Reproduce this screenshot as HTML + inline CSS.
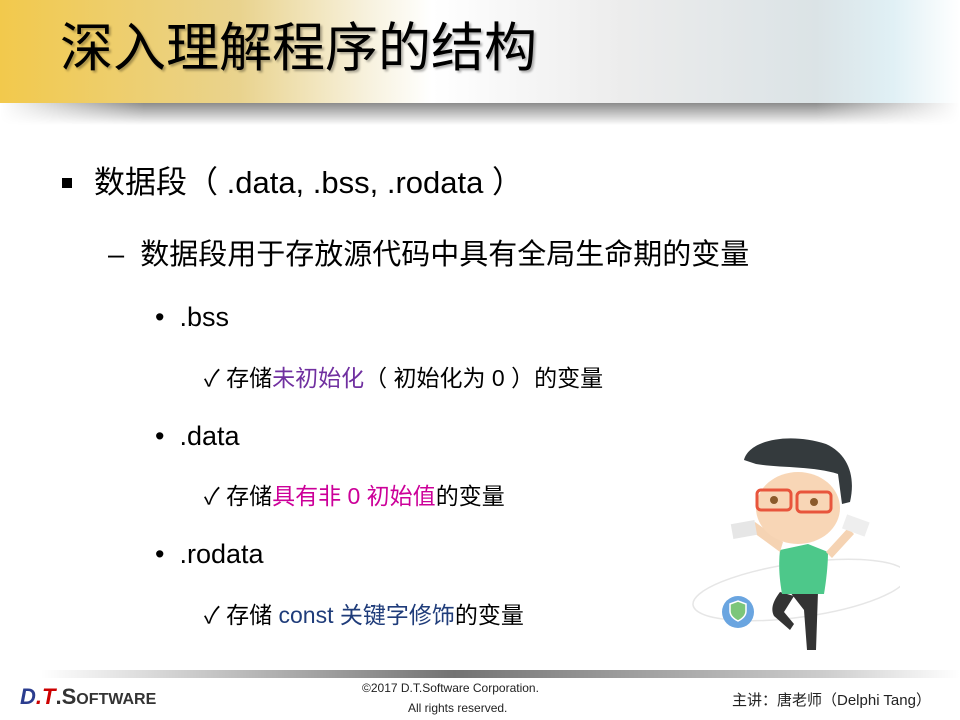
<!DOCTYPE html>
<html><head><meta charset="utf-8"><style>
body{margin:0;width:960px;height:720px;position:relative;overflow:hidden;background:#fff;font-family:"Liberation Sans","Noto Sans CJK SC",sans-serif;color:#000}
.t{position:absolute;white-space:nowrap;line-height:1}
#band{position:absolute;left:0;top:0;width:960px;height:103px;background:linear-gradient(90deg,#f2c94c 0%,#e9d38e 25%,#f7f1dc 38%,#fff 45%,#ececec 65%,#dbe3e6 85%,#e0f0f5 93%,#fff 100%)}
#sh{position:absolute;left:0;top:103px;width:960px;height:22px;background:linear-gradient(180deg,rgba(0,0,0,.45),rgba(0,0,0,0));-webkit-mask:linear-gradient(90deg,transparent,#000 15%,#000 85%,transparent);mask:linear-gradient(90deg,transparent,#000 15%,#000 85%,transparent)}
#fl{position:absolute;left:40px;top:670px;width:920px;height:8px;background:linear-gradient(90deg,rgba(0,0,0,0),rgba(0,0,0,.55) 45%,rgba(0,0,0,.2) 85%,rgba(0,0,0,0))}
.pu{color:#7030a0}.mg{color:#cc0099}.bl{color:#1f3c7a}
</style></head><body>
<div id="band"></div><div id="sh"></div>
<div class="t" style="left:60px;top:22px;font-size:53px;font-weight:400;text-shadow:2px 2px 2px rgba(0,0,0,.3)">深入理解程序的结构</div>
<div style="position:absolute;left:62px;top:178px;width:10px;height:10px;background:#000"></div>
<div class="t" style="left:94px;top:167px;font-size:31px">数据段（ .data, .bss, .rodata ）</div>
<div class="t" style="left:108px;top:241px;font-size:29px">–&nbsp; 数据段用于存放源代码中具有全局生命期的变量</div>
<div class="t" style="left:155px;top:304px;font-size:27px">•&nbsp; .bss</div>
<div class="t" style="left:204px;top:367px;font-size:23px">✓ 存储<span class="pu">未初始化</span>（ 初始化为 0 ）的变量</div>
<div class="t" style="left:155px;top:423px;font-size:27px">•&nbsp; .data</div>
<div class="t" style="left:204px;top:485px;font-size:23px">✓ 存储<span class="mg">具有非 0 初始值</span>的变量</div>
<div class="t" style="left:155px;top:541px;font-size:27px">•&nbsp; .rodata</div>
<div class="t" style="left:204px;top:604px;font-size:23px">✓ 存储 <span class="bl">const 关键字修饰</span>的变量</div>
<svg style="position:absolute;left:680px;top:420px" width="220" height="250">
<ellipse cx="120" cy="170" rx="108" ry="27" fill="none" stroke="#e6e6e6" stroke-width="1.5" transform="rotate(-8 120 170)"/>
<circle cx="58" cy="192" r="16" fill="#6aa5e0"/><path d="M50 184l8-3 8 3v7c0 5-4 8-8 10-4-2-8-5-8-10z" fill="#7cc67a" stroke="#fff" stroke-width="1.5"/>
<path d="M100 172c-6 8-10 16-6 24l16 14 4-6-10-12 10-16z" fill="#333"/>
<path d="M110 172h28l-2 58h-9l-3-40z" fill="#333"/>
<path d="M100 130c-2 18 0 32 2 44h42c2-12 4-28 4-42l-20-8z" fill="#4dc88a"/>
<path d="M100 132l-30-22 5-8 28 20zM146 132l22-24 6 6-22 24z" fill="#f5d3b3"/>
<rect x="52" y="102" width="24" height="15" fill="#e6e6e6" transform="rotate(-10 64 110)"/>
<rect x="164" y="98" width="24" height="15" fill="#eee" transform="rotate(20 176 105)"/>
<ellipse cx="118" cy="88" rx="42" ry="36" fill="#f8d6b6"/>
<path d="M64 40c5-20 45-28 82-16 22 10 30 32 24 58l-8 2-4-30c-25-8-60-6-82-10z" fill="#343a3d"/>
<rect x="77" y="70" width="34" height="20" rx="4" fill="none" stroke="#e8553c" stroke-width="3"/>
<rect x="117" y="72" width="34" height="20" rx="4" fill="none" stroke="#e8553c" stroke-width="3"/>
<circle cx="94" cy="80" r="4" fill="#8b5a2b"/><circle cx="134" cy="82" r="4" fill="#8b5a2b"/>
</svg>
<div id="fl"></div>
<div class="t" style="left:20px;top:686px;font-size:22px;font-weight:bold;font-style:italic;color:#2b3d8f">D<span style="color:#c00">.T</span><span style="color:#333;font-style:normal">.S<span style="font-size:16px">OFTWARE</span></span></div>
<div class="t" style="left:362px;top:682px;font-size:12px;color:#222">©2017 D.T.Software Corporation.</div>
<div class="t" style="left:408px;top:702px;font-size:12px;color:#222">All rights reserved.</div>
<div class="t" style="left:732px;top:693px;font-size:15px;color:#222">主讲：唐老师（Delphi Tang）</div>
</body></html>
